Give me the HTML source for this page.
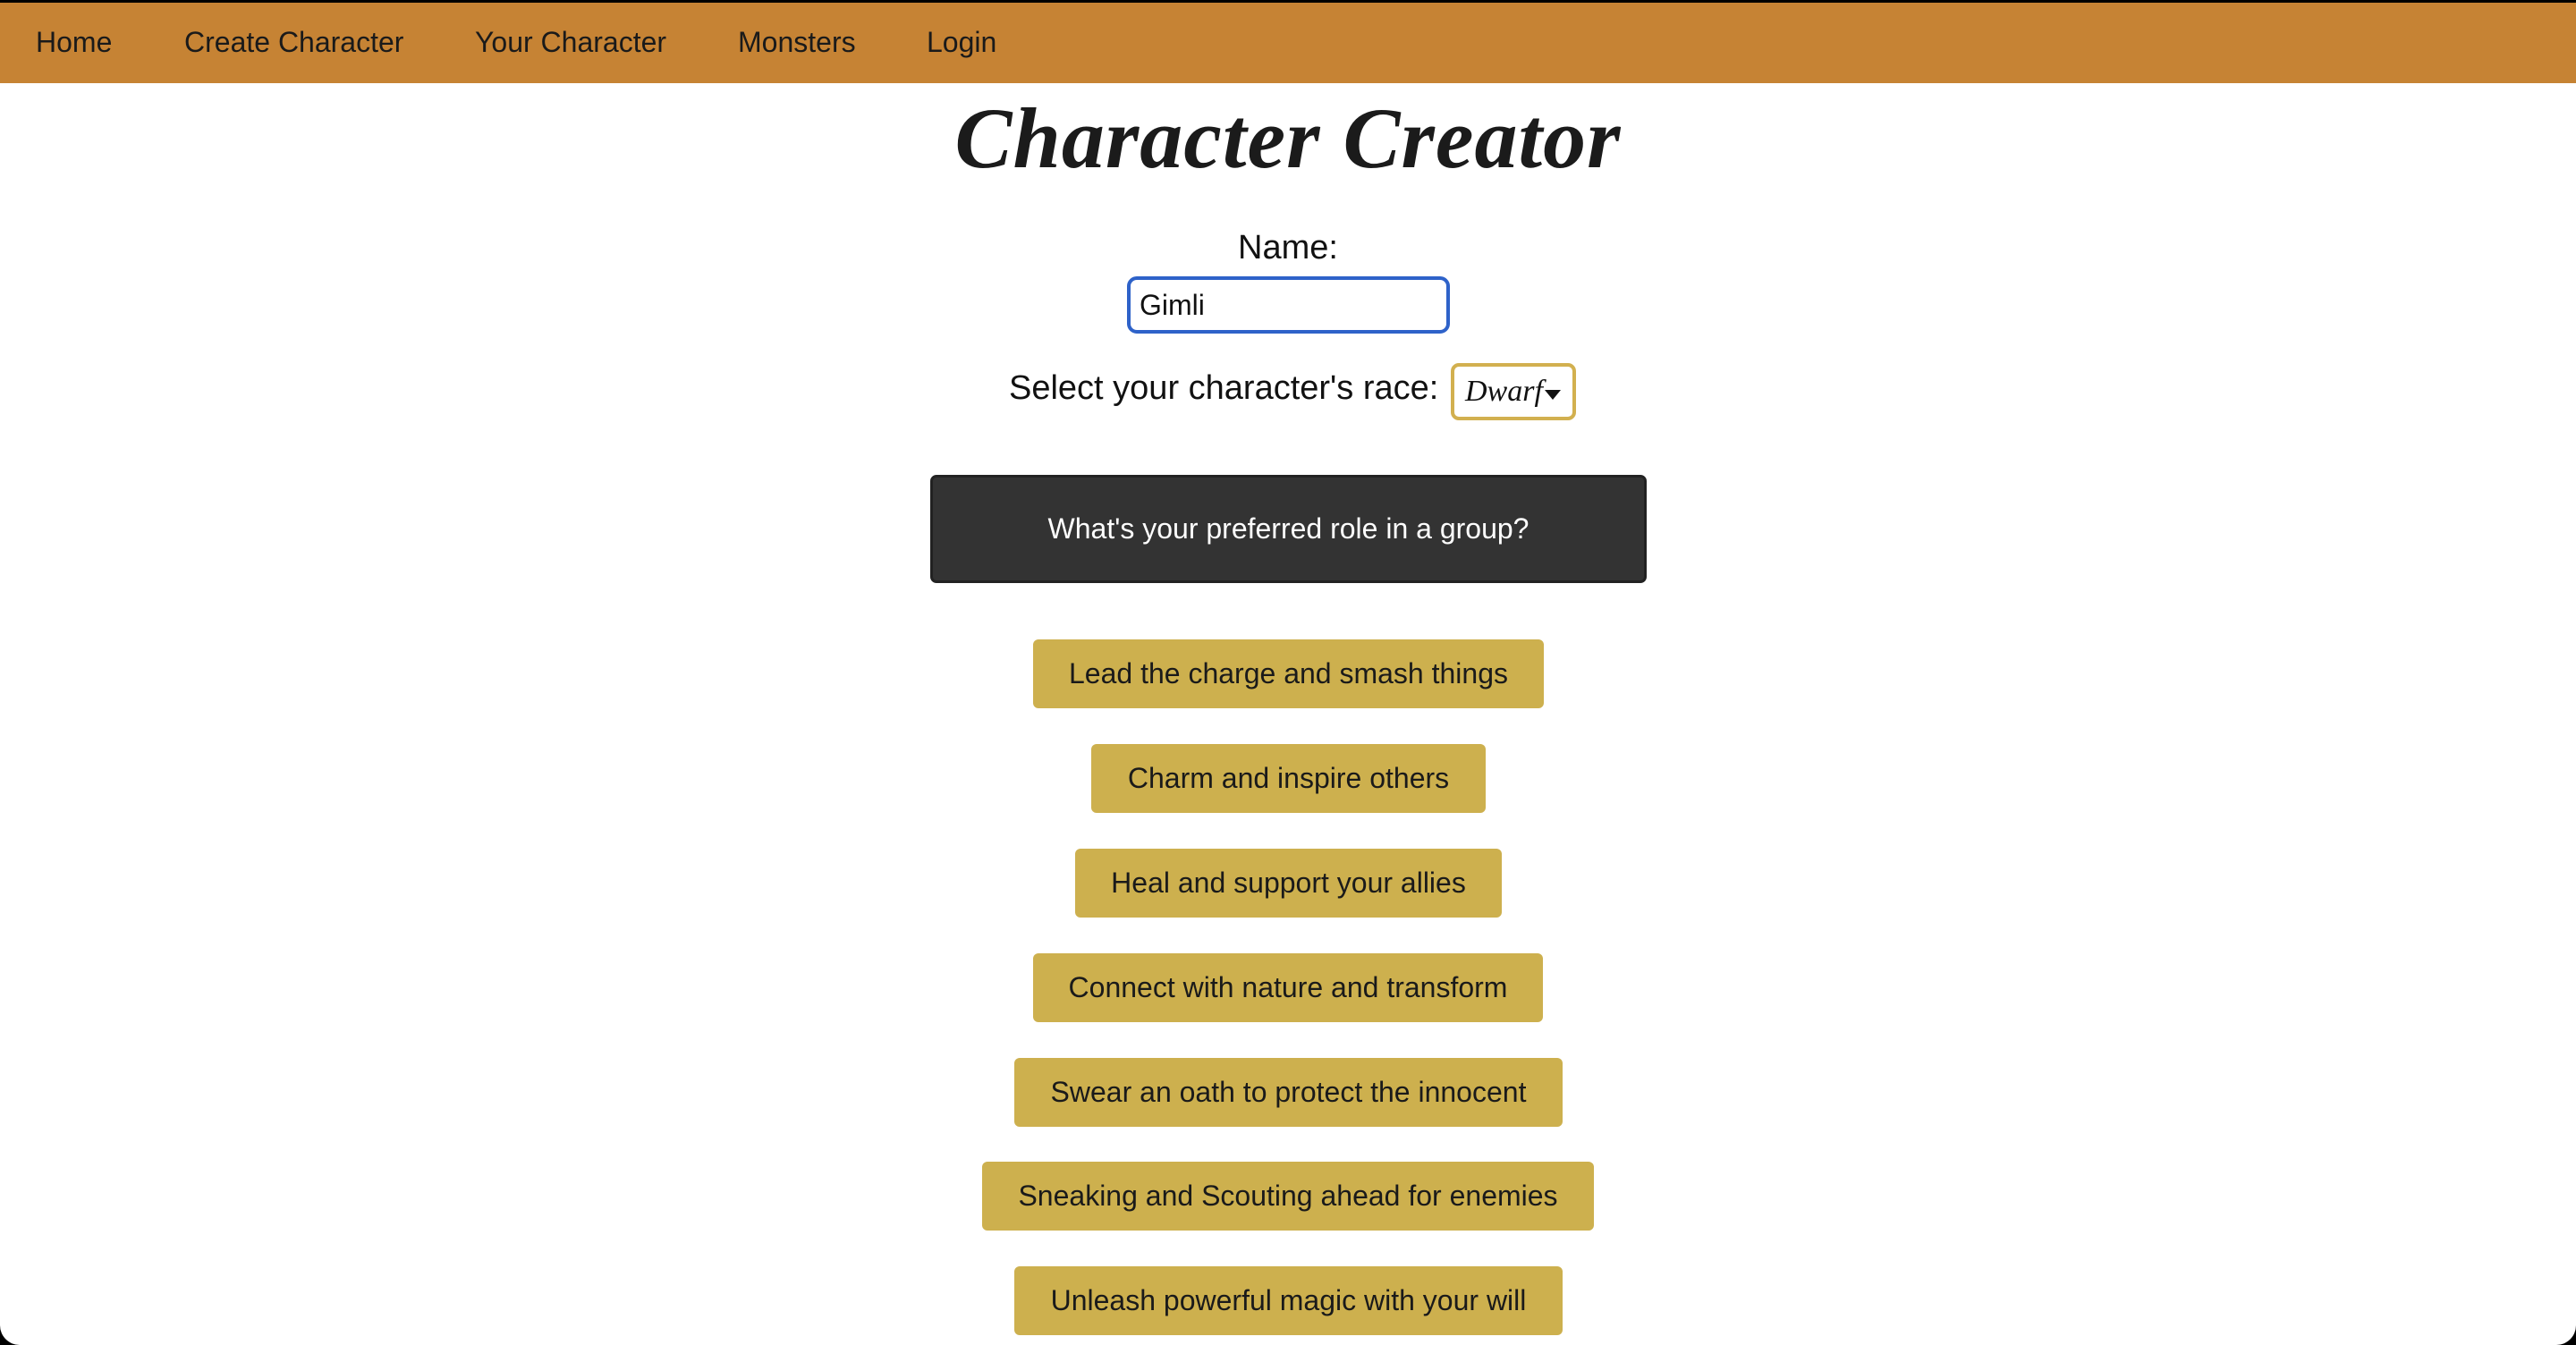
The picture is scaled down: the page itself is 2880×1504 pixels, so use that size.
<!DOCTYPE html>
<html><head><meta charset="utf-8">
<style>
html,body{margin:0;padding:0;background:#000;width:2880px;height:1504px;overflow:hidden;}
#page{position:absolute;left:0;top:3px;width:2880px;height:1501px;background:#fff;border-radius:0 0 22px 22px;overflow:hidden;font-family:"Liberation Sans",Arial,sans-serif;color:#111;}
nav{position:absolute;left:0;top:0;width:2880px;height:90px;background:#c68334;}
nav span{position:absolute;top:26px;font-size:32px;color:#1a1a1a;}
h1{position:absolute;left:0;width:2880px;top:96px;margin:0;text-align:center;font-family:"Liberation Serif",serif;font-weight:bold;font-style:italic;font-size:96px;color:#1b1b1b;letter-spacing:1px;}
.c{position:absolute;left:0;width:2880px;text-align:center;}
.name{top:253px;font-size:38px;}
.input{position:absolute;left:1260px;top:306px;width:343px;height:56px;border:4px solid #2e62c9;border-radius:11px;font-size:32px;line-height:56px;padding-left:10px;box-sizing:content-box;}
.race{top:410px;font-size:38px;left:1128px;width:auto;text-align:left;}
.sel{position:absolute;left:1622px;top:403px;border:4px solid #d2b04f;border-radius:9px;font-family:"Liberation Serif",serif;font-style:italic;font-size:34px;line-height:56px;padding-left:12px;box-sizing:border-box;width:140px;height:64px;}
.sel i{position:absolute;left:101px;top:26px;width:0;height:0;border-left:9px solid transparent;border-right:9px solid transparent;border-top:11px solid #111;}
.q{position:absolute;left:1040px;top:528px;width:801px;height:121px;background:#333;border:3px solid #222;border-radius:7px;box-sizing:border-box;color:#fff;font-size:32px;line-height:115px;text-align:center;}
.b{position:absolute;height:77px;background:#cdb04e;border-radius:6px;font-size:32px;line-height:77px;text-align:center;color:#1a1a1a;}
</style></head><body>
<div id="page">
<nav>
<span style="left:40px">Home</span>
<span style="left:206px">Create Character</span>
<span style="left:531px">Your Character</span>
<span style="left:825px">Monsters</span>
<span style="left:1036px">Login</span>
</nav>
<h1>Character Creator</h1>
<div class="c name">Name:</div>
<div class="input">Gimli</div>
<div class="c race">Select your character's race:</div>
<div class="sel">Dwarf<i></i></div>
<div class="q">What's your preferred role in a group?</div>
<div class="b" style="left:1155px;width:571px;top:712px">Lead the charge and smash things</div>
<div class="b" style="left:1220px;width:441px;top:829px">Charm and inspire others</div>
<div class="b" style="left:1202px;width:477px;top:946px">Heal and support your allies</div>
<div class="b" style="left:1155px;width:570px;top:1063px">Connect with nature and transform</div>
<div class="b" style="left:1134px;width:613px;top:1180px">Swear an oath to protect the innocent</div>
<div class="b" style="left:1098px;width:684px;top:1296px">Sneaking and Scouting ahead for enemies</div>
<div class="b" style="left:1134px;width:613px;top:1413px">Unleash powerful magic with your will</div>
</div>
</body></html>
